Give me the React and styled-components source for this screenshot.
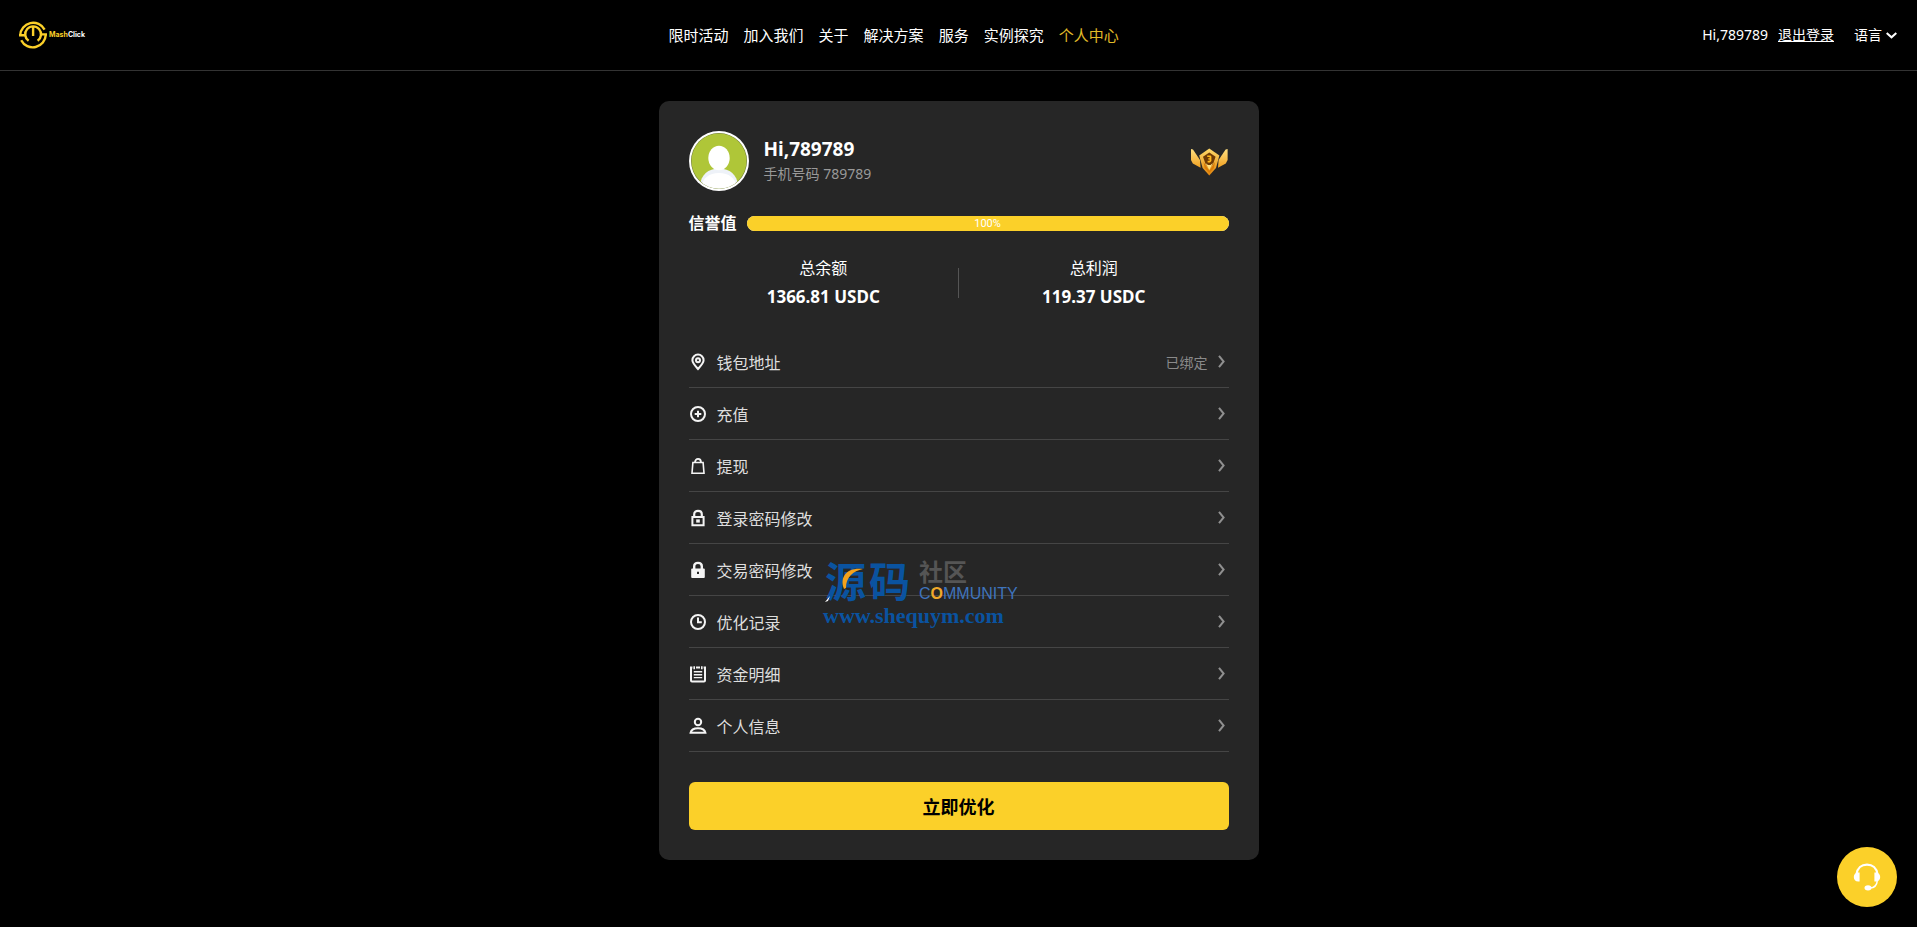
import React from "react";
import styled, { createGlobalStyle, ThemeProvider } from "styled-components";

const theme = {
    colors: {
        bg: "#000",
        card: "#262626",
        yellow: "#fbd029",
        gold: "#e0bb28",
        line: "#454545",
        text: "#fff",
        item: "#dedede",
        muted: "#999",
    },
};

const GlobalStyle = createGlobalStyle`
    * {
        box-sizing: border-box;
        margin: 0;
        padding: 0;
    }

    body {
        background-color: ${theme.colors.bg};
        color: ${theme.colors.text};
        font-family: "Noto Sans", "Noto Sans CJK SC", sans-serif;
        font-size: 14px;
    }

    a {
        color: inherit;
        text-decoration: none;
    }

    button {
        border: none;
        background: none;
        color: inherit;
        font-family: inherit;
        cursor: pointer;
    }

    ul {
        list-style: none;
    }

    svg {
        display: block;
        flex-shrink: 0;
    }
`;

const Header = styled.header`
    display: flex;
    align-items: center;
    justify-content: space-between;
    min-height: 71px;
    padding: 0 20px 0 19px;
    border-bottom: 1px solid #333;
`;

const LogoLink = styled.a`
    display: flex;
    align-items: center;
    gap: 2px;
    font-family: Inter, sans-serif;
    font-size: 7px;
    font-weight: 700;
    line-height: 12px;

    span {
        color: ${({ theme }) => theme.colors.yellow};
    }
`;

const NavList = styled.ul`
    display: flex;
    gap: 15px;
`;

const NavLink = styled.a`
    font-size: 15px;
    line-height: 24px;
    color: ${({ theme, $active }) => ($active ? theme.colors.gold : theme.colors.text)};
`;

const UserBar = styled.div`
    display: flex;
    align-items: center;
    gap: 10px;
    line-height: 24px;
`;

const LogoutLink = styled.a`
    text-decoration: underline;
`;

const LangButton = styled.button`
    display: flex;
    align-items: center;
    gap: 4px;
    margin-left: 10px;
    font-size: 14px;
    line-height: 24px;
`;

const Main = styled.main`
    padding: 30px 20px;
`;

const Card = styled.section`
    position: relative;
    max-width: 600px;
    margin: 0 auto;
    padding: 30px;
    border-radius: 10px;
    background-color: ${({ theme }) => theme.colors.card};
`;

const Profile = styled.div`
    display: flex;
    align-items: center;
    gap: 15px;
`;

const ProfileInfo = styled.div`
    flex: 1;
`;

const UserName = styled.h1`
    font-size: 19px;
    font-weight: 700;
    line-height: 26px;
`;

const Phone = styled.p`
    line-height: 24px;
    color: ${({ theme }) => theme.colors.muted};
`;

const Credit = styled.div`
    display: flex;
    align-items: center;
    gap: 10px;
    margin-top: 20px;
    font-size: 16px;
    font-weight: 700;
    line-height: 24px;
`;

const CreditTrack = styled.div`
    flex: 1;
    border-radius: 8px;
    background-color: #ebedf0;
`;

const CreditFill = styled.div`
    border-radius: 8px;
    background-color: ${({ theme }) => theme.colors.yellow};
    font-family: Roboto, sans-serif;
    font-size: 11px;
    font-weight: 400;
    line-height: 15px;
    text-align: center;
`;

const Stats = styled.dl`
    display: flex;
    align-items: center;
    padding: 21px 0 27px;
`;

const Stat = styled.div`
    display: flex;
    flex: 1;
    flex-direction: column;
    gap: 5px;
    font-size: 16px;
    line-height: 24px;
    text-align: center;

    dd {
        font-size: 17px;
        font-weight: 700;
    }
`;

const Divider = styled.div`
    width: 1px;
    height: 30px;
    background-color: #555;
`;

const MenuLink = styled.a`
    display: flex;
    align-items: center;
    gap: 10px;
    height: 52px;
    padding-right: 4px;
    border-bottom: 1px solid ${({ theme }) => theme.colors.line};
    font-size: 16px;
    color: ${({ theme }) => theme.colors.item};
`;

const MenuLabel = styled.span`
    flex: 1;
`;

const MenuNote = styled.span`
    font-size: 14px;
    color: #8a8a8a;
`;

const SubmitButton = styled.button`
    display: block;
    width: 100%;
    height: 48px;
    margin-top: 30px;
    border-radius: 6px;
    background-color: ${({ theme }) => theme.colors.yellow};
    color: #000;
    font-size: 18px;
    font-weight: 700;
`;

const Watermark = styled.svg`
    position: absolute;
    top: 454px;
    left: 162px;
    overflow: visible;
    pointer-events: none;
`;

const ServiceButton = styled.button`
    position: fixed;
    right: 20px;
    bottom: 20px;
    display: flex;
    align-items: center;
    justify-content: center;
    width: 60px;
    height: 60px;
    border-radius: 50%;
    background-color: ${({ theme }) => theme.colors.yellow};
    color: #fff;
`;

const LogoMark = () => (
    <svg width="28" height="30" viewBox="0 0 28 30" fill="none" stroke="#fbd029" strokeWidth="2.4">
        <path d="M1.2 15.2A13 13 0 0 1 25.600 9.600" />
        <path d="M26.800 14.600A13 13 0 0 1 2.200 20.200" />
        <path d="M0 15.200H6.400M21.600 14.400H28" />
        <path d="M9.600 20.800A7.900 7.900 0 1 1 18.600 20.800" />
        <path d="M14.100 7V16" />
    </svg>
);

const Avatar = () => (
    <svg width="60" height="60" viewBox="0 0 60 60">
        <defs>
            <clipPath id="avatar-clip">
                <circle cx="30" cy="30" r="27.5" />
            </clipPath>
        </defs>
        <circle cx="30" cy="30" r="30" fill="#fff" />
        <circle cx="30" cy="30" r="28" fill="#6f7a3a" />
        <g clipPath="url(#avatar-clip)">
            <rect width="60" height="60" fill="#afc638" />
            <path d="M11 54C12 44 19 37.5 30 37.5S48 44 49 54L44 60H16Z" fill="#eef2f8" />
            <path d="M12 56C14 47 20 42 30 42S46 47 48 56L44 60H16Z" fill="#fff" />
            <ellipse cx="30" cy="27" rx="10.7" ry="12.2" fill="#fff" />
        </g>
    </svg>
);

const Medal = () => (
    <svg width="40" height="40" viewBox="0 0 40 40">
        <defs>
            <linearGradient id="medal-gold" x1="0" y1="0" x2="0" y2="1">
                <stop offset="0" stopColor="#ffd968" />
                <stop offset="1" stopColor="#e0850e" />
            </linearGradient>
            <linearGradient id="wing-gold" x1="0" y1="0" x2="0" y2="1">
                <stop offset="0" stopColor="#ffdf80" />
                <stop offset="1" stopColor="#f0a020" />
            </linearGradient>
        </defs>
        <path d="M2 8L4 8.6L11 19L11.600 26.800L3.800 22.400L2 19Z" fill="url(#wing-gold)" />
        <path d="M38.600 8L36.600 8.600L29.600 19L29 26.800L36.800 22.400L38.600 19Z" fill="url(#wing-gold)" />
        <path d="M20.300 7.400L30.400 14.600L27 27L20.300 34.400L13.600 27L10.200 14.600Z" fill="url(#medal-gold)" />
        <path d="M20.300 11.400L26.600 15.800L24 23L20.300 27.400L16.600 23L14 15.800Z" fill="#6d3905" />
        <path d="M14.600 21L20.300 30L26 21L25 27L20.300 32L15.600 27Z" fill="#d97c08" />
        <path d="M16.500 22L20.300 29L24 22L21.500 24H19Z" fill="#ffdf7c" />
        <path d="M18.200 14.400H21.600L22.400 15.400V20L21 21.400H18.600V19.800H20.600V18.400H19.200V17.200H20.600V16H18.200Z" fill="#ffb81c" />
    </svg>
);

const Headset = () => (
    <svg width="28" height="28" viewBox="0 0 28 28" fill="none" stroke="currentColor">
        <path d="M3.600 11C4.400 5.200 8.400 1.600 14 1.600S23.600 5.200 24.400 11" strokeWidth="2.200" />
        <path d="M24.400 17C24 22 21.500 25 17 25" strokeWidth="1.500" />
        <path d="M6.600 9.400V18.400H5.200C2.400 18.400 .800 16.400 .800 13.900S2.600 9.400 5.200 9.400ZM21.400 9.400V18.400H22.800C25.600 18.400 27.200 16.400 27.200 13.900S25.400 9.400 22.800 9.400Z" fill="currentColor" stroke="none" />
        <ellipse cx="15" cy="24.800" rx="3.500" ry="2.600" fill="currentColor" stroke="none" />
    </svg>
);

const ArrowRight = () => (
    <svg width="7" height="13" viewBox="0 0 7 13" fill="none" stroke="#8f8f8f" strokeWidth="2">
        <path d="M1 .8L5.600 6.500L1 12.200" />
    </svg>
);

const ArrowDown = () => (
    <svg width="11" height="7" viewBox="0 0 11 7" fill="none" stroke="currentColor" strokeWidth="2">
        <path d="M.700 1L5.500 5.300L10.300 1" />
    </svg>
);

const icons = {
    pin: (
        <>
            <path d="M9 16C6 12.600 3.400 9.800 3.400 7.200a5.600 5.600 0 0 1 11.200 0C14.600 9.800 12 12.600 9 16Z" />
            <circle cx="9" cy="7.300" r="2" />
        </>
    ),
    plus: (
        <>
            <circle cx="9" cy="9" r="7" />
            <path d="M9 5.700V12.300M5.700 9H12.300" />
        </>
    ),
    bag: (
        <>
            <path d="M3.900 5.500H14.100L15 16.200H3Z" strokeWidth="1.600" />
            <path d="M6 5.400C6 .800 12 .800 12 5.400" strokeWidth="1.800" />
        </>
    ),
    lock: (
        <>
            <path d="M3.400 8H14.600V16.200H3.400Z" />
            <path d="M5.200 8V5.200C5.200 .700 12.800 .700 12.800 5.200V8" strokeWidth="2.200" />
            <path d="M7.200 10.400H10.800V13.600H7.200Z" fill="currentColor" stroke="none" />
        </>
    ),
    lockFilled: (
        <>
            <path d="M3.200 7.400H14.800Q15.800 7.400 15.800 8.400V16Q15.800 17 14.800 17H3.200Q2.200 17 2.200 16V8.400Q2.200 7.400 3.200 7.400Z" fill="currentColor" stroke="none" />
            <path d="M5.200 8V5.200C5.200 .700 12.800 .700 12.800 5.200V8" strokeWidth="2.400" />
            <path d="M8 10.800H10V13H8Z" fill="#262626" stroke="none" />
        </>
    ),
    clock: (
        <>
            <circle cx="9" cy="9" r="7" />
            <path d="M9 4.600V9.200H12.800" />
        </>
    ),
    list: (
        <>
            <path d="M3.400 2.600H2V15.400Q2 16.400 3 16.400H15Q16 16.400 16 15.400V2.600H14.600M7 2.600H11" />
            <path d="M5.200 1.200V4.200M12.800 1.200V4.200" strokeWidth="1.600" />
            <path d="M4.800 6.800H13.200M4.800 9.700H13.200M4.800 12.600H13.200" strokeWidth="1.400" />
        </>
    ),
    user: (
        <>
            <circle cx="9" cy="5" r="3.200" />
            <path d="M1.600 15.800C2.200 12.600 5 11.200 9 11.200S15.800 12.600 16.400 15.800Z" />
        </>
    ),
};

const Icon = ({ name }) => (
    <svg width="18" height="18" viewBox="0 0 18 18" fill="none" stroke="currentColor" strokeWidth="2" color="#f4f4f4">
        {icons[name]}
    </svg>
);

const navItems = ["限时活动", "加入我们", "关于", "解决方案", "服务", "实例探究", "个人中心"];

const menuItems = [
    { icon: "pin", label: "钱包地址", note: "已绑定" },
    { icon: "plus", label: "充值" },
    { icon: "bag", label: "提现" },
    { icon: "lock", label: "登录密码修改" },
    { icon: "lockFilled", label: "交易密码修改" },
    { icon: "clock", label: "优化记录" },
    { icon: "list", label: "资金明细" },
    { icon: "user", label: "个人信息" },
];

const credit = 100;

const App = () => {
    return (
        <ThemeProvider theme={theme}>
            <GlobalStyle />
            <Header>
                <LogoLink href="#">
                    <LogoMark />
                    <div><span>Mash</span>Click</div>
                </LogoLink>
                <nav>
                    <NavList>
                        {navItems.map((item) => (
                            <li key={item}>
                                <NavLink href="#" $active={item === "个人中心"}>{item}</NavLink>
                            </li>
                        ))}
                    </NavList>
                </nav>
                <UserBar>
                    <span>Hi,789789</span>
                    <LogoutLink href="#">退出登录</LogoutLink>
                    <LangButton type="button">
                        语言
                        <ArrowDown />
                    </LangButton>
                </UserBar>
            </Header>
            <Main>
                <Card>
                    <Profile>
                        <Avatar />
                        <ProfileInfo>
                            <UserName>Hi,789789</UserName>
                            <Phone>手机号码 789789</Phone>
                        </ProfileInfo>
                        <Medal />
                    </Profile>
                    <Credit>
                        <span>信誉值</span>
                        <CreditTrack>
                            <CreditFill style={{ width: `${credit}%` }}>{credit}%</CreditFill>
                        </CreditTrack>
                    </Credit>
                    <Stats>
                        <Stat>
                            <dt>总余额</dt>
                            <dd>1366.81 USDC</dd>
                        </Stat>
                        <Divider />
                        <Stat>
                            <dt>总利润</dt>
                            <dd>119.37 USDC</dd>
                        </Stat>
                    </Stats>
                    <ul>
                        {menuItems.map(({ icon, label, note }) => (
                            <li key={label}>
                                <MenuLink href="#">
                                    <Icon name={icon} />
                                    <MenuLabel>{label}</MenuLabel>
                                    {note && <MenuNote>{note}</MenuNote>}
                                    <ArrowRight />
                                </MenuLink>
                            </li>
                        ))}
                    </ul>
                    <SubmitButton type="button">立即优化</SubmitButton>
                    <Watermark width="202" height="78" viewBox="0 0 202 78">
                        <g fontFamily="Liberation Sans, Noto Sans CJK SC, sans-serif" fontWeight="700">
                            <text y="42" fontSize="41" fill="#0a53a0">
                                <tspan x="4">源</tspan>
                                <tspan x="48">码</tspan>
                            </text>
                            <text x="98" y="26" fontSize="24" fill="#555">社区</text>
                        </g>
                        <path d="M23 34C18 21 27 12 42 14C32 16 25 22 25 33Z" fill="#f5a21b" />
                        <path d="M4 47L9 41L7 46Z" fill="#fff" />
                        <text x="98" y="44" fontFamily="Liberation Sans, sans-serif" fontSize="16" fill="#3f74bd">
                            C<tspan fill="#f0a92a" fontWeight="700">O</tspan>MMUNITY
                        </text>
                        <text x="2" y="68" fontFamily="Liberation Serif, serif" fontSize="22" fontWeight="700" fill="#0a53a0">
                            www.shequym.com
                        </text>
                    </Watermark>
                </Card>
            </Main>
            <ServiceButton type="button" aria-label="客服">
                <Headset />
            </ServiceButton>
        </ThemeProvider>
    );
};

export default App;
